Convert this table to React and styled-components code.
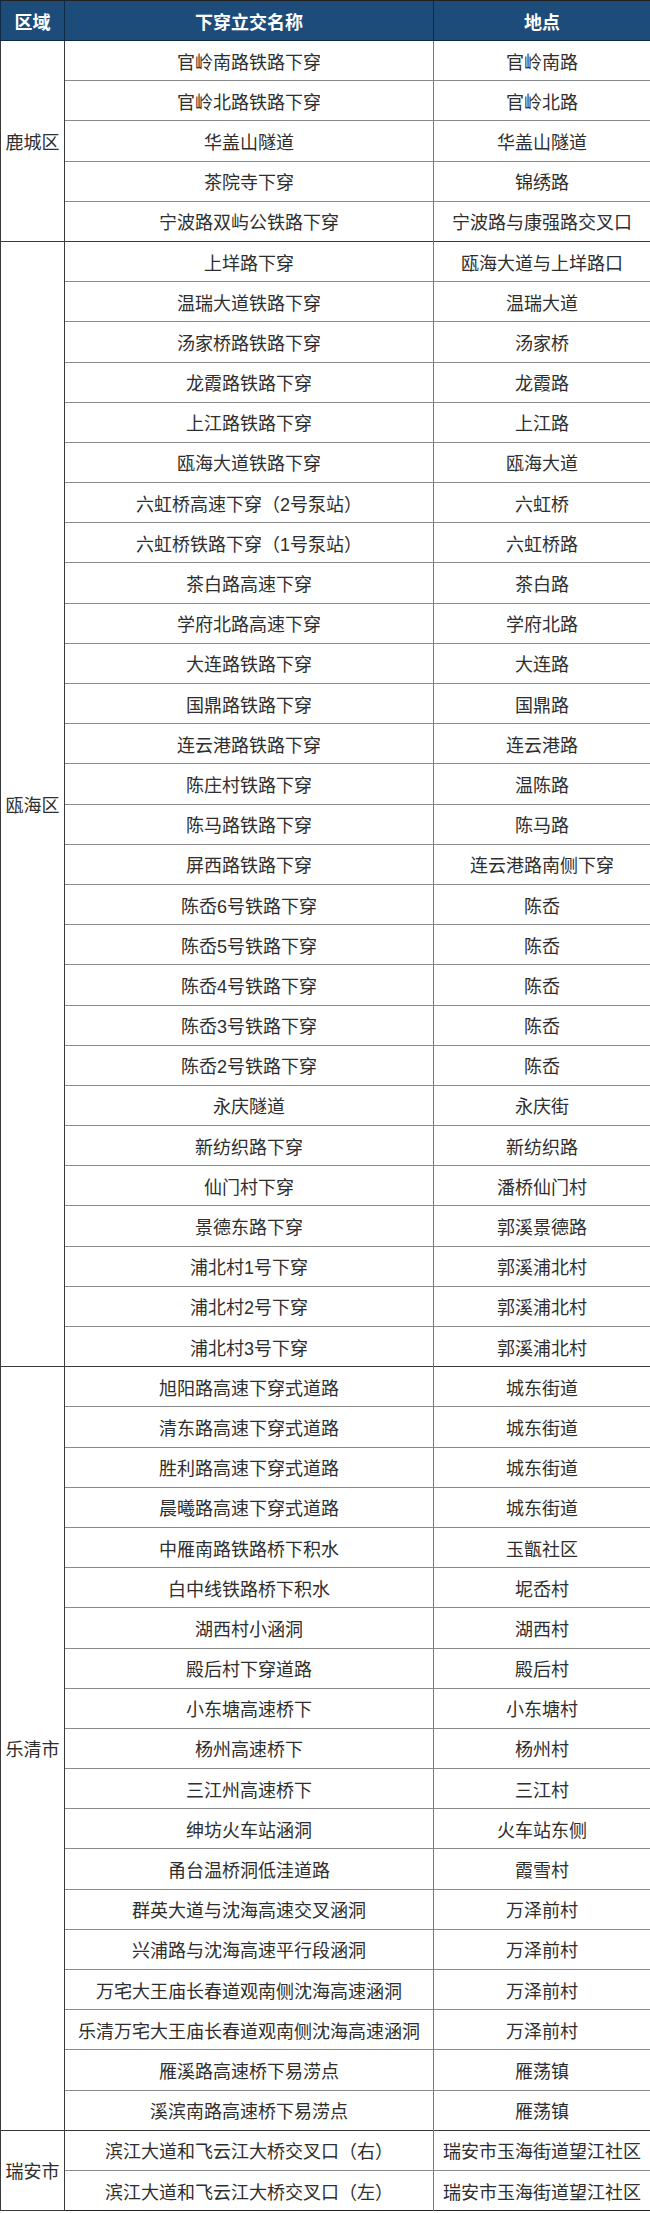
import React from "react";
import styled, { createGlobalStyle } from "styled-components";

const GlobalStyle = createGlobalStyle`
  html, body { margin: 0; padding: 0; background: #fff; }
  body { font-family: "Liberation Sans", "Noto Sans CJK SC", sans-serif; }
`;

const Table = styled.table`
  width: 650px;
  border-collapse: collapse;
  table-layout: fixed;
  border: 1px solid #222;
  font-family: "Liberation Sans", "Noto Sans CJK SC", sans-serif;
  font-size: 18px;
  color: #2e2e2e;
`;

const Col = styled.col`
  width: ${(p) => p.$w}px;
`;

const HeadRow = styled.tr`
  height: 40px;
  background: #1d4c7b;
`;

const HeadCell = styled.th`
  color: #fff;
  font-weight: bold;
  font-size: 18px;
  text-align: center;
  padding: 0;
  border-left: 1px solid #0f2a45;
  border-bottom: 1px solid #0f2a45;
`;

const Row = styled.tr`
  height: 40.2px;
`;

const RegionCell = styled.td`
  text-align: center;
  vertical-align: middle;
  padding: 0;
  border: 1px solid #3a3a3a;
  white-space: nowrap;
`;

const Cell = styled.td`
  text-align: center;
  vertical-align: middle;
  padding: 0;
  border-left: 1px solid #7a7a7a;
  border-top: 1px solid ${(p) => (p.$first ? "#3a3a3a" : "#8a8a8a")};
  white-space: nowrap;
`;

const data = [
  {
    region: "鹿城区",
    rows: [
      ["官岭南路铁路下穿", "官岭南路"],
      ["官岭北路铁路下穿", "官岭北路"],
      ["华盖山隧道", "华盖山隧道"],
      ["茶院寺下穿", "锦绣路"],
      ["宁波路双屿公铁路下穿", "宁波路与康强路交叉口"],
    ],
  },
  {
    region: "瓯海区",
    rows: [
      ["上垟路下穿", "瓯海大道与上垟路口"],
      ["温瑞大道铁路下穿", "温瑞大道"],
      ["汤家桥路铁路下穿", "汤家桥"],
      ["龙霞路铁路下穿", "龙霞路"],
      ["上江路铁路下穿", "上江路"],
      ["瓯海大道铁路下穿", "瓯海大道"],
      ["六虹桥高速下穿（2号泵站）", "六虹桥"],
      ["六虹桥铁路下穿（1号泵站）", "六虹桥路"],
      ["茶白路高速下穿", "茶白路"],
      ["学府北路高速下穿", "学府北路"],
      ["大连路铁路下穿", "大连路"],
      ["国鼎路铁路下穿", "国鼎路"],
      ["连云港路铁路下穿", "连云港路"],
      ["陈庄村铁路下穿", "温陈路"],
      ["陈马路铁路下穿", "陈马路"],
      ["屏西路铁路下穿", "连云港路南侧下穿"],
      ["陈岙6号铁路下穿", "陈岙"],
      ["陈岙5号铁路下穿", "陈岙"],
      ["陈岙4号铁路下穿", "陈岙"],
      ["陈岙3号铁路下穿", "陈岙"],
      ["陈岙2号铁路下穿", "陈岙"],
      ["永庆隧道", "永庆街"],
      ["新纺织路下穿", "新纺织路"],
      ["仙门村下穿", "潘桥仙门村"],
      ["景德东路下穿", "郭溪景德路"],
      ["浦北村1号下穿", "郭溪浦北村"],
      ["浦北村2号下穿", "郭溪浦北村"],
      ["浦北村3号下穿", "郭溪浦北村"],
    ],
  },
  {
    region: "乐清市",
    rows: [
      ["旭阳路高速下穿式道路", "城东街道"],
      ["清东路高速下穿式道路", "城东街道"],
      ["胜利路高速下穿式道路", "城东街道"],
      ["晨曦路高速下穿式道路", "城东街道"],
      ["中雁南路铁路桥下积水", "玉甑社区"],
      ["白中线铁路桥下积水", "坭岙村"],
      ["湖西村小涵洞", "湖西村"],
      ["殿后村下穿道路", "殿后村"],
      ["小东塘高速桥下", "小东塘村"],
      ["杨州高速桥下", "杨州村"],
      ["三江州高速桥下", "三江村"],
      ["绅坊火车站涵洞", "火车站东侧"],
      ["甬台温桥洞低洼道路", "霞雪村"],
      ["群英大道与沈海高速交叉涵洞", "万泽前村"],
      ["兴浦路与沈海高速平行段涵洞", "万泽前村"],
      ["万宅大王庙长春道观南侧沈海高速涵洞", "万泽前村"],
      ["乐清万宅大王庙长春道观南侧沈海高速涵洞", "万泽前村"],
      ["雁溪路高速桥下易涝点", "雁荡镇"],
      ["溪滨南路高速桥下易涝点", "雁荡镇"],
    ],
  },
  {
    region: "瑞安市",
    rows: [
      ["滨江大道和飞云江大桥交叉口（右）", "瑞安市玉海街道望江社区"],
      ["滨江大道和飞云江大桥交叉口（左）", "瑞安市玉海街道望江社区"],
    ],
  },
];

export default function App() {
  return (
    <>
      <GlobalStyle />
      <Table>
        <colgroup>
          <Col $w={64} />
          <Col $w={369} />
          <Col $w={217} />
        </colgroup>
        <thead>
          <HeadRow>
            <HeadCell>区域</HeadCell>
            <HeadCell>下穿立交名称</HeadCell>
            <HeadCell>地点</HeadCell>
          </HeadRow>
        </thead>
        <tbody>
          {data.map((group) =>
            group.rows.map((r, i) => (
              <Row key={group.region + i}>
                {i === 0 && (
                  <RegionCell rowSpan={group.rows.length}>{group.region}</RegionCell>
                )}
                <Cell $first={i === 0}>{r[0]}</Cell>
                <Cell $first={i === 0}>{r[1]}</Cell>
              </Row>
            ))
          )}
        </tbody>
      </Table>
    </>
  );
}
